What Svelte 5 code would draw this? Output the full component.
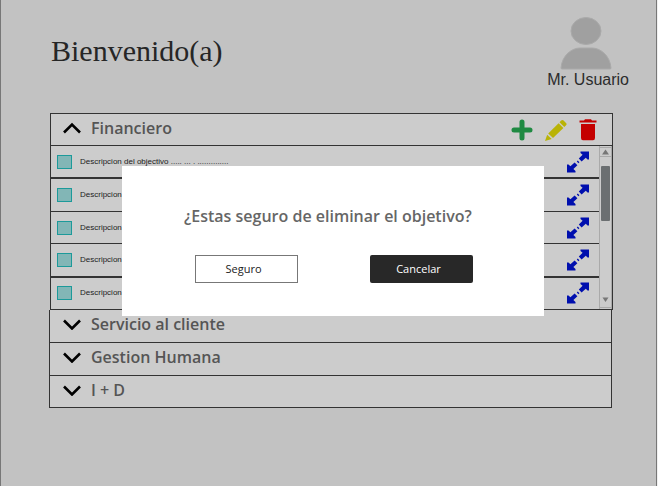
<script>
  let open = $state(true);
  const goals = [
    { text: 'Descripcion del objectivo ..... ... . ..............', thick: true },
    { text: 'Descripcion del objectivo', thick: false },
    { text: 'Descripcion del objectivo', thick: false },
    { text: 'Descripcion del objectivo', thick: true },
    { text: 'Descripcion del objectivo', thick: false }
  ];
  const areas = ['Servicio al cliente', 'Gestion Humana', 'I + D'];
</script>

<div class="page">
  <header>
    <h1>Bienvenido(a)</h1>
    <div class="user">
      <svg width="52" height="54" viewBox="0 0 52 54" aria-hidden="true">
        <ellipse cx="26" cy="14" rx="15" ry="13.5" fill="#a0a0a0" stroke="#aaa" />
        <path d="M1 51C2 38 12 31 20 31H32C40 31 50 38 51 51Q51 52 50 52H2Q1 52 1 51Z" fill="#a0a0a0" stroke="#aaa" />
      </svg>
      <span>Mr. Usuario</span>
    </div>
  </header>

  <main>
    <section class="panel">
      <div class="bar">
        <button class="toggle" aria-expanded={open} onclick={() => (open = !open)}>
          <svg width="18" height="12" viewBox="0 0 18 12" aria-hidden="true">
            <path d="M1 10.5L9 2.5L17 10.5" fill="none" stroke="#000" stroke-width="2.6" />
          </svg>
          <span>Financiero</span>
        </button>
        <div class="tools">
          <button aria-label="Agregar">
            <svg width="22" height="22" viewBox="0 0 22 22">
              <path d="M11 3V19M3 11H19" stroke="#1f8a42" stroke-width="5" stroke-linecap="round" />
            </svg>
          </button>
          <button aria-label="Editar">
            <svg width="22" height="22" viewBox="0 0 22 22" fill="#b9b306">
              <path d="M16.2 1.6Q17.4 .5 18.6 1.6L21 4Q22.1 5.2 21 6.3L19.3 8L14.5 3.3Z" />
              <path d="M13.6 4.2L18.4 9L8 19L3.2 14.5Z" />
              <path d="M2.2 15.8L6.7 20L0 22Z" />
            </svg>
          </button>
          <button aria-label="Eliminar">
            <svg width="18" height="22" viewBox="0 0 18 22" fill="#c40000">
              <path d="M.5 1.5H5L6 .3H12L13 1.5H17.5V3.5H.5Z" />
              <path d="M2 5H16V19Q16 21.3 14 21.3H4Q2 21.3 2 19Z" />
            </svg>
          </button>
        </div>
      </div>
      {#if open}
        <div class="scroller">
          <ul>
            {#each goals as goal, i}
              <li class:thick={goal.thick}>
                <label for="goal-{i}">
                  <input type="checkbox" id="goal-{i}" />
                  <span>{goal.text}</span>
                </label>
                <button aria-label="Ampliar">
                  <svg width="22" height="22" viewBox="0 0 22 22" fill="#000fae">
                    <path d="M13.5 .5H22V8.5H20.5L18.8 6.8L14.6 10.4L11.8 7.6L15.6 3.8L13.5 2Z" />
                    <path d="M0 13.5H1.5L3.4 15.2L7.6 11.4L10.4 14.2L6.4 18L8.5 20V21.5H0Z" />
                    <path d="M10.8 9.6L12.4 11.2L11.4 12.2L9.8 10.6Z" />
                  </svg>
                </button>
              </li>
            {/each}
          </ul>
          <div class="track" aria-hidden="true">
            <div class="arrow">
              <svg width="9" height="6" viewBox="0 0 9 6"><path d="M1 5.5L4.5 .5L8 5.5Z" fill="#777" /></svg>
            </div>
            <div class="thumb"></div>
            <div class="arrow down">
              <svg width="9" height="6" viewBox="0 0 9 6"><path d="M1.5 .5L4.5 5L7.5 .5Z" fill="#777" /></svg>
            </div>
          </div>
        </div>
      {/if}
    </section>

    <section class="areas">
      {#each areas as area}
        <button class="area" aria-expanded="false">
          <svg width="18" height="12" viewBox="0 0 18 12" aria-hidden="true">
            <path d="M1 2.5L9 10.5L17 2.5" fill="none" stroke="#000" stroke-width="2.6" />
          </svg>
          <span>{area}</span>
        </button>
      {/each}
    </section>
  </main>

  <div class="dialog" role="dialog" aria-modal="true" aria-labelledby="question">
    <h2 id="question">¿Estas seguro de eliminar el objetivo?</h2>
    <div class="actions">
      <button class="sure">Seguro</button>
      <button class="cancel">Cancelar</button>
    </div>
  </div>
</div>

<style>
  :global(body) {
    margin: 0;
    background: #f0f0f0;
  }
  .page {
    position: relative;
    box-sizing: border-box;
    min-height: 100vh;
    margin-right: 1px;
    padding: 16px 43px 0 48px;
    border: solid #777;
    border-width: 0 1px;
    background: #c2c2c2;
    font-family: 'Open Sans', 'Noto Sans', sans-serif;
  }
  button {
    padding: 0;
    border: 0;
    background: none;
    font: inherit;
    color: inherit;
    cursor: pointer;
  }
  svg {
    display: block;
  }
  header {
    display: flex;
    justify-content: space-between;
    height: 97px;
    margin-right: -16px;
  }
  h1 {
    margin: 18px 0 0 2px;
    font: 30px/34px 'Baskerville Old Face', Baskerville, 'Liberation Serif', serif;
    color: #262626;
  }
  .user {
    display: flex;
    flex-direction: column;
    align-items: center;
    padding-top: 1px;
    font: 16px/18px 'Liberation Sans', sans-serif;
    color: #2c2c2c;
  }
  .user svg {
    margin-right: 4px;
  }
  .panel {
    margin-left: 1px;
    border: 1px solid #333;
    background: #ccc;
  }
  .bar {
    display: flex;
    justify-content: space-between;
    align-items: center;
    height: 31px;
    padding: 0 15px 0 12px;
    border-bottom: 1px solid #333;
  }
  .toggle,
  .area {
    display: flex;
    align-items: center;
    gap: 10px;
    font-size: 16px;
    font-weight: 600;
    line-height: 28px;
    color: #555;
  }
  .toggle {
    padding-bottom: 3px;
  }
  .tools {
    display: flex;
    gap: 12px;
  }
  .scroller {
    display: flex;
    height: 163px;
  }
  ul {
    flex: 1;
    display: flex;
    flex-direction: column;
    margin: 0;
    padding: 0;
    list-style: none;
  }
  li {
    flex: 1;
    display: flex;
    justify-content: space-between;
    align-items: center;
    padding: 0 10px 0 6px;
    border-bottom: 1px solid #333;
  }
  li.thick {
    border-bottom-width: 2px;
  }
  li:last-child {
    border-bottom: 0;
  }
  label {
    display: flex;
    align-items: center;
    gap: 8px;
    font: 8px/12px 'Liberation Sans', sans-serif;
    color: #222;
  }
  input {
    appearance: none;
    box-sizing: border-box;
    width: 15px;
    height: 14px;
    margin: 0;
    border: 1px solid #1c9a9a;
    background: #82b6b6;
  }
  .track {
    display: flex;
    flex-direction: column;
    box-sizing: border-box;
    width: 13px;
    padding: 1px 0;
    border: solid #aaa;
    border-width: 0 1px;
    background: #ccc;
  }
  .arrow {
    display: flex;
    justify-content: center;
    align-items: center;
    box-sizing: border-box;
    height: 10px;
    border: solid #aaa;
    border-width: 1px 0;
  }
  .arrow.down {
    height: 16px;
    border-top: 0;
  }
  .thumb {
    width: 9px;
    height: 55px;
    margin: 9px 1px auto;
    border-radius: 1px;
    background: #6b6f71;
  }
  .areas {
    margin-right: 1px;
    border: solid #333;
    border-width: 0 1px;
    background: #ccc;
  }
  .area {
    box-sizing: border-box;
    width: 100%;
    height: 33px;
    padding: 0 13px 4px;
    border-bottom: 1px solid #333;
  }
  .area:last-child {
    height: 32px;
  }
  .dialog {
    position: absolute;
    top: 166px;
    left: 121px;
    right: 112px;
    box-sizing: border-box;
    padding: 38px 71px 33px 73px;
    background: #fff;
  }
  h2 {
    margin: 0 0 0 -11px;
    font-size: 16px;
    font-weight: 600;
    line-height: 24px;
    white-space: nowrap;
    color: #666;
  }
  .actions {
    display: flex;
    justify-content: space-between;
    margin-top: 27px;
  }
  .actions button {
    box-sizing: border-box;
    width: 103px;
    height: 28px;
    padding: 0 6px 2px 0;
    font-size: 11px;
    color: #222;
  }
  .actions .sure {
    border: 1px solid #777;
  }
  .actions .cancel {
    border-radius: 2px;
    background: #282828;
    color: #fff;
  }
</style>
